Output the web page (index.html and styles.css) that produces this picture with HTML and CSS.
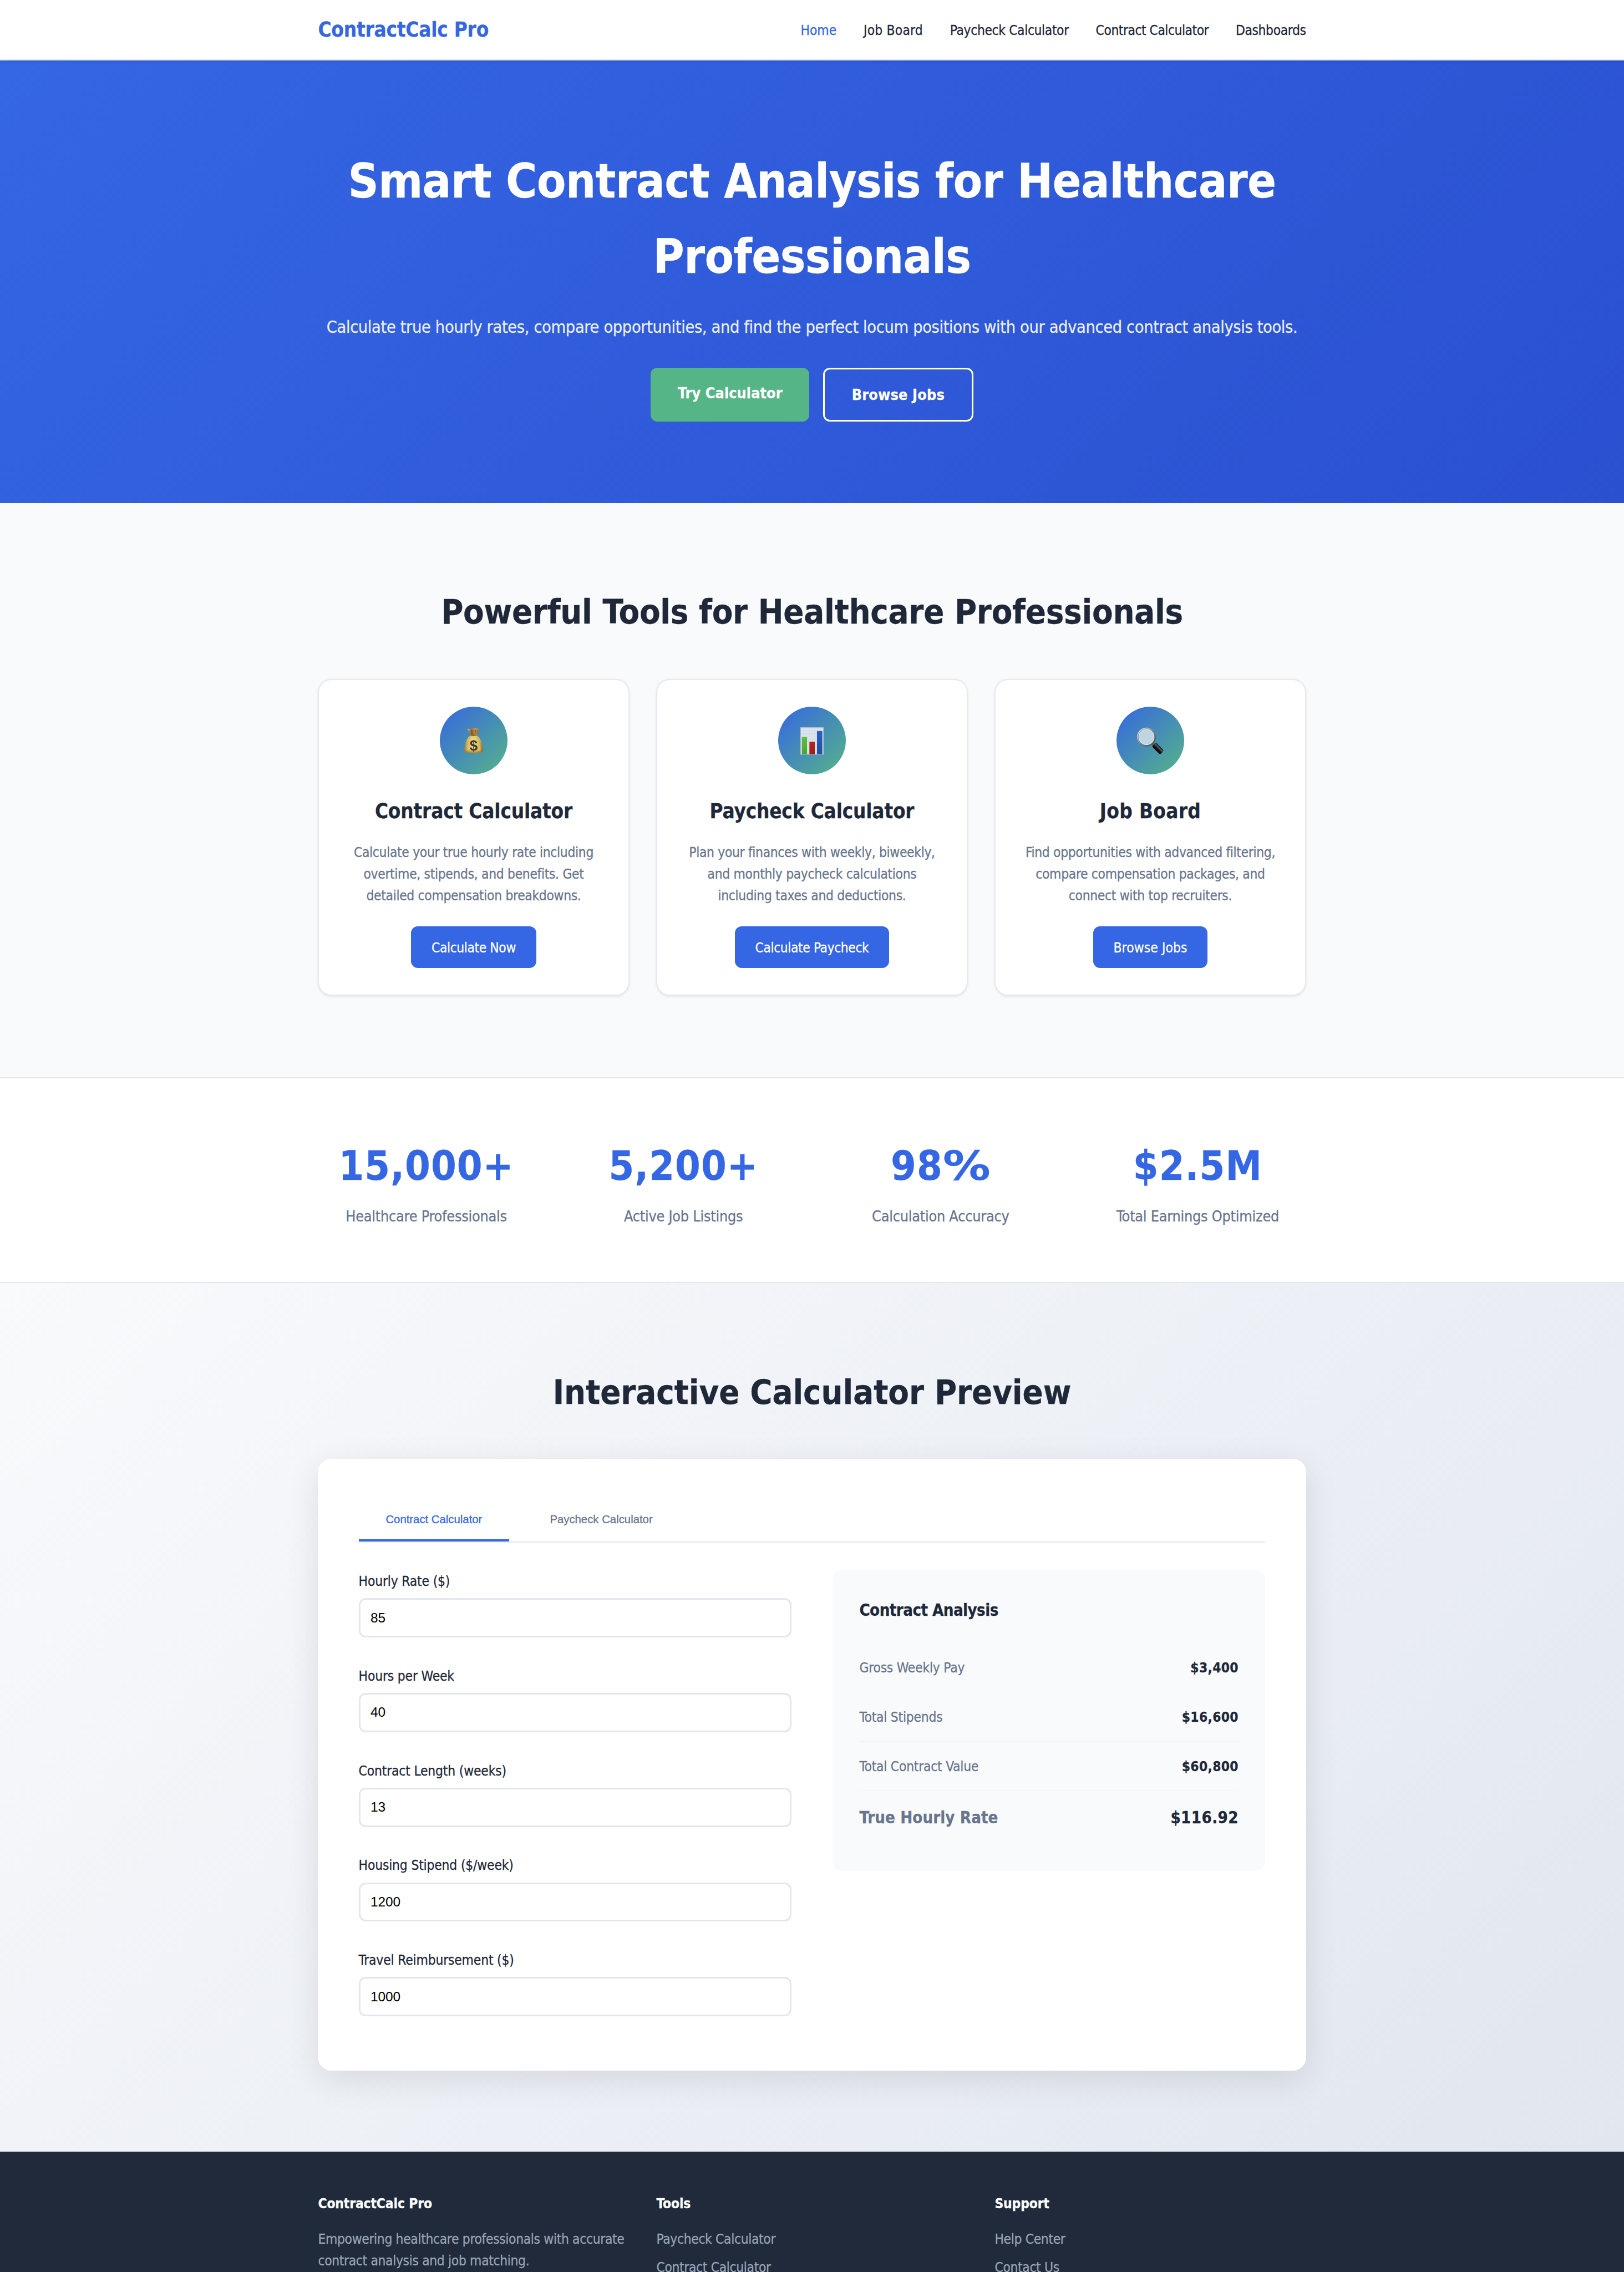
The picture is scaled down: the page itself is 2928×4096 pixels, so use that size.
FILE: index.html
```html
<!DOCTYPE html>
<html lang="en">
<head>
<meta charset="utf-8">
<title>ContractCalc Pro</title>
<link rel="stylesheet" href="styles.css">
</head>
<body>
<div class="page">
  <header class="header">
    <div class="container header-inner">
      <a class="logo">ContractCalc Pro</a>
      <nav class="nav">
        <a class="nav-link active">Home</a>
        <a class="nav-link wide">Job Board</a>
        <a class="nav-link">Paycheck Calculator</a>
        <a class="nav-link tight">Contract Calculator</a>
        <a class="nav-link">Dashboards</a>
      </nav>
    </div>
  </header>

  <section class="hero">
    <div class="container">
      <h1 class="hero-title">Smart Contract Analysis for Healthcare<br>Professionals</h1>
      <p class="hero-text">Calculate true hourly rates, compare opportunities, and find the perfect locum positions with our advanced contract analysis tools.</p>
      <div class="hero-actions">
        <a class="btn-hero btn-green">Try Calculator</a>
        <a class="btn-hero btn-outline">Browse Jobs</a>
      </div>
    </div>
  </section>

  <section class="tools">
    <div class="container">
      <h2 class="section-title tight">Powerful Tools for Healthcare Professionals</h2>
      <div class="cards">
        <article class="card">
          <div class="card-icon">
            <svg viewBox="0 0 314 314">
              <defs>
                <linearGradient id="bag" x1="0" x2="1"><stop offset="0" stop-color="#a9812f"/><stop offset=".2" stop-color="#dcc068"/><stop offset=".5" stop-color="#ecd983"/><stop offset=".82" stop-color="#d8b95c"/><stop offset="1" stop-color="#8a6424"/></linearGradient>
                <linearGradient id="neck" x1="0" x2="1"><stop offset="0" stop-color="#c9ad7a"/><stop offset=".35" stop-color="#8d5c20"/><stop offset=".6" stop-color="#b98743"/><stop offset="1" stop-color="#8a6a3e"/></linearGradient>
                <linearGradient id="shade" x1="0" x2="0" y1="0" y2="1"><stop offset=".8" stop-color="#7a4d12" stop-opacity="0"/><stop offset="1" stop-color="#7a4d12" stop-opacity=".65"/></linearGradient>
              </defs>
              <path fill="url(#bag)" d="M144 133C130 141 121 156 118 174C116 185 113 198 114 206C117 214 135 216 157 216C179 216 197 214 200 206C201 198 198 185 196 174C193 156 184 141 170 133Z"/>
              <path fill="url(#shade)" d="M144 133C130 141 121 156 118 174C116 185 113 198 114 206C117 214 135 216 157 216C179 216 197 214 200 206C201 198 198 185 196 174C193 156 184 141 170 133Z"/>
              <path fill="none" stroke="#a37a2c" stroke-opacity=".5" stroke-width="2" d="M148 136C138 146 130 158 127 178M166 136C178 148 186 162 189 182M157 136V146"/>
              <path fill="url(#neck)" d="M127 105C134 101 139 104 145 102C151 99 157 105 163 101C169 99 175 104 186 105C181 114 176 124 171 133Q157 138 143 133C138 124 134 113 127 105Z"/>
              <path fill="none" stroke="#e4cf9f" stroke-width="2" d="M130 106Q138 104 145 104T163 103T183 106"/>
              <path fill="none" stroke="#744814" stroke-width="2" d="M146 106L151 132M167 106L162 132M143 133Q157 138 171 133"/>
              <text class="bag-sign" x="157" y="203">$</text>
            </svg>
          </div>
          <h3 class="card-title">Contract Calculator</h3>
          <p class="card-text">Calculate your true hourly rate including<br>overtime, stipends, and benefits. Get<br>detailed compensation breakdowns.</p>
          <a class="btn">Calculate Now</a>
        </article>
        <article class="card">
          <div class="card-icon">
            <svg viewBox="0 0 314 314">
              <defs>
                <pattern id="mesh" width="4" height="4" patternUnits="userSpaceOnUse"><path d="M0 0H4M0 0V4" stroke="#b3bfcc" stroke-width="1.2"/></pattern>
                <linearGradient id="green" x1="0" x2="0" y1="0" y2="1"><stop stop-color="#5dbf40"/><stop offset="1" stop-color="#4aa535"/></linearGradient>
                <linearGradient id="red" x1="0" x2="0" y1="0" y2="1"><stop stop-color="#b5271d"/><stop offset="1" stop-color="#9c1f16"/></linearGradient>
                <linearGradient id="blue" x1="0" x2="0" y1="0" y2="1"><stop stop-color="#2860c6"/><stop offset="1" stop-color="#1f4fa4"/></linearGradient>
              </defs>
              <rect x="103" y="96" width="108" height="126" fill="#e6eef6"/>
              <rect x="103" y="96" width="108" height="126" fill="url(#mesh)"/>
              <rect x="104" y="97" width="106" height="124" fill="none" stroke="#a9b6c3" stroke-width="2"/>
              <rect x="110" y="141" width="24" height="80" fill="url(#green)"/>
              <rect x="145" y="163" width="25" height="58" fill="url(#red)"/>
              <rect x="180" y="113" width="25" height="108" fill="url(#blue)"/>
            </svg>
          </div>
          <h3 class="card-title">Paycheck Calculator</h3>
          <p class="card-text">Plan your finances with weekly, biweekly,<br>and monthly paycheck calculations<br>including taxes and deductions.</p>
          <a class="btn">Calculate Paycheck</a>
        </article>
        <article class="card">
          <div class="card-icon">
            <svg viewBox="0 0 314 314">
              <defs>
                <linearGradient id="rim" x1="0" y1="0" x2="1" y2="1"><stop stop-color="#eef0f2"/><stop offset=".45" stop-color="#8b8f93"/><stop offset="1" stop-color="#3e4145"/></linearGradient>
                <linearGradient id="handle" x1="0" y1="0" x2="1" y2="0"><stop stop-color="#050607"/><stop offset=".45" stop-color="#15181b"/><stop offset=".7" stop-color="#596068"/><stop offset="1" stop-color="#0b0c0e"/></linearGradient>
              </defs>
              <path d="M167 169L178 180" stroke="#6c5d55" stroke-width="11"/>
              <rect x="-13" y="-27" width="26" height="54" rx="8" transform="translate(192 194) rotate(-45)" fill="url(#handle)"/>
              <circle cx="139" cy="141" r="41" fill="#bfd5e2" stroke="url(#rim)" stroke-width="6"/>
              <circle cx="139" cy="141" r="38" fill="none" stroke="#4f565c" stroke-width="1.5"/>
              <circle cx="139" cy="141" r="35" fill="none" stroke="#d8e6ee" stroke-width="3"/>
            </svg>
          </div>
          <h3 class="card-title wide">Job Board</h3>
          <p class="card-text">Find opportunities with advanced filtering,<br>compare compensation packages, and<br>connect with top recruiters.</p>
          <a class="btn wide">Browse Jobs</a>
        </article>
      </div>
    </div>
  </section>

  <section class="stats">
    <div class="container stats-grid">
      <div><div class="stat-number">15,000+</div><div class="stat-label">Healthcare Professionals</div></div>
      <div><div class="stat-number">5,200+</div><div class="stat-label">Active Job Listings</div></div>
      <div><div class="stat-number">98<span class="percent">%</span></div><div class="stat-label">Calculation Accuracy</div></div>
      <div><div class="stat-number">$2.5M</div><div class="stat-label">Total Earnings Optimized</div></div>
    </div>
  </section>

  <section class="preview">
    <div class="container">
      <h2 class="section-title">Interactive Calculator Preview</h2>
      <div class="calculator">
        <div class="tabs">
          <button class="tab active">Contract Calculator</button>
          <button class="tab">Paycheck Calculator</button>
        </div>
        <div class="calc-grid">
          <form class="form">
            <div class="field"><label>Hourly Rate ($)</label><input type="text" value="85"></div>
            <div class="field"><label>Hours per Week</label><input type="text" value="40"></div>
            <div class="field"><label>Contract Length (weeks)</label><input type="text" value="13"></div>
            <div class="field"><label>Housing Stipend ($/week)</label><input type="text" value="1200"></div>
            <div class="field"><label>Travel Reimbursement ($)</label><input type="text" value="1000"></div>
          </form>
          <div class="results">
            <h3 class="results-title">Contract Analysis</h3>
            <div class="row"><span>Gross Weekly Pay</span><strong>$3,400</strong></div>
            <div class="row"><span>Total Stipends</span><strong>$16,600</strong></div>
            <div class="row"><span>Total Contract Value</span><strong>$60,800</strong></div>
            <div class="row total"><span>True Hourly Rate</span><strong>$116.92</strong></div>
          </div>
        </div>
      </div>
    </div>
  </section>

  <footer class="footer">
    <div class="container footer-grid">
      <div>
        <h4>ContractCalc Pro</h4>
        <p>Empowering healthcare professionals with accurate<br>contract analysis and job matching.</p>
      </div>
      <div>
        <h4>Tools</h4>
        <ul><li>Paycheck Calculator</li><li>Contract Calculator</li></ul>
      </div>
      <div>
        <h4>Support</h4>
        <ul><li>Help Center</li><li>Contact Us</li></ul>
      </div>
    </div>
  </footer>
</div>
</body>
</html>
```
FILE: styles.css
```css
:root {
  --primary: #3566e3;
  --primary-dark: #2a50d0;
  --green: #56b586;
  --ink: #1f2839;
  --muted: #68758c;
  --line: #e2e7ee;
  --bg: #f9fafc;
  font-size: 24.4px;
}

* { box-sizing: border-box; margin: 0; padding: 0; }

body {
  font-family: "DejaVu Sans Condensed", "DejaVu Sans", sans-serif;
  font-stretch: condensed;
  line-height: 1.6;
  letter-spacing: -0.0125em;
  -webkit-text-stroke: .012em;
  color: var(--ink);
  background: var(--bg);
}

.page { height: 4096px; overflow: hidden; }

.container { width: 73rem; margin: 0 auto; }

/* Lowers the baseline a little inside each line box, without changing the box's height in the flow */
.logo, .nav-link, .hero-title, .hero-text, .card-title, .card-text,
.stat-label, .field label, .results-title, .footer h4, .footer p, .footer li {
  padding-top: .04em;
}
.section-title, .stat-number { padding-top: .02em; }

/* Header */
.header {
  position: relative;
  background: #fff;
  border-bottom: 2px solid var(--line);
  box-shadow: 0 .0625rem .25rem rgba(0, 0, 0, .12);
}
.header-inner { display: flex; align-items: center; justify-content: space-between; height: 4.38rem; padding-top: .05rem; }
.logo { font-size: 1.5rem; font-weight: 700; color: var(--primary); letter-spacing: -0.006em; }
.nav { display: flex; gap: 2rem; letter-spacing: -0.0155em; }
.nav-link.wide { letter-spacing: .008em; }
.nav-link.tight { letter-spacing: -0.02em; }
.nav-link.active { color: var(--primary); letter-spacing: 0; }

/* Hero */
.hero {
  padding: 6rem 0;
  text-align: center;
  color: #fff;
  background: linear-gradient(135deg, var(--primary), var(--primary-dark));
}
.hero-title { font-size: 3.5rem; font-weight: 700; letter-spacing: -0.008em; margin-bottom: calc(1.5rem - .04em); }
.hero-text { font-size: 1.25rem; white-space: nowrap; letter-spacing: -0.0125em; opacity: .9; margin-bottom: calc(2rem - .04em); }
.hero-actions { display: flex; justify-content: center; gap: 1rem; }
.btn-hero { padding: 1.04rem 2rem .96rem; border-radius: .5rem; font-size: 1.1rem; font-weight: 700; letter-spacing: .002em; }
.btn-green { background: var(--green); }
.btn-outline { border: .125rem solid #fff; letter-spacing: .006em; }

/* Tools */
.tools { padding: 6rem 0; }
.section-title { font-size: 2.5rem; font-weight: 700; text-align: center; letter-spacing: -0.0015em; margin-bottom: calc(3rem - .02em); }
.section-title.tight { letter-spacing: -0.0045em; }
.cards { display: grid; grid-template-columns: repeat(3, 1fr); gap: 2rem; }
.card {
  display: flex;
  flex-direction: column;
  align-items: center;
  padding: 1.98rem;
  text-align: center;
  background: #fff;
  border: 2px solid #e5e9f0;
  border-radius: 1rem;
  box-shadow: 0 .0625rem .1875rem rgba(0, 0, 0, .08);
}
.card-icon {
  width: 5rem;
  height: 5rem;
  margin-bottom: 1.5rem;
  border-radius: 50%;
  background: linear-gradient(135deg, var(--primary), var(--green));
}
.card-icon svg { display: block; width: 100%; height: 100%; }
.bag-sign { font: 700 66px "Liberation Sans", sans-serif; fill: #3a332f; text-anchor: middle; letter-spacing: 0; -webkit-text-stroke: 0; }
.card-title { font-size: 1.5rem; font-weight: 700; letter-spacing: -0.005em; margin-bottom: calc(1rem - .04em); }
.card-title.wide { letter-spacing: .009em; }
.card-text { color: var(--muted); white-space: nowrap; letter-spacing: -0.0135em; margin-bottom: calc(1.5rem - .04em); }
.btn { padding: .78rem 1.5rem .72rem; border-radius: .5rem; color: #fff; background: var(--primary); letter-spacing: -0.017em; }
.btn.wide { letter-spacing: .004em; }

/* Stats */
.stats { padding: 4rem 0; background: #fff; border-top: 2px solid var(--line); border-bottom: 2px solid var(--line); text-align: center; }
.stats-grid { display: grid; grid-template-columns: repeat(4, 1fr); gap: 3rem; }
.stat-number { font-size: 3rem; line-height: 4.8rem; font-weight: 700; color: var(--primary); letter-spacing: .014em; margin-bottom: calc(.5rem - .02em); }
.percent { display: inline-block; transform: scaleX(1.3); transform-origin: left; margin-right: .27em; letter-spacing: 0; }
.stat-label { font-size: 1.1rem; color: var(--muted); letter-spacing: -0.0095em; margin-bottom: -.04em; }

/* Calculator preview */
.preview { padding: 6rem 0; background: linear-gradient(135deg, var(--bg), #e1e6ef); }
.calculator { padding: 3rem; background: #fff; border-radius: 1rem; box-shadow: 0 .625rem 2.5rem rgba(0, 0, 0, .1); }
.tabs { display: flex; gap: 1rem; margin-bottom: 2rem; border-bottom: 2px solid var(--line); }
.tab {
  padding: 1rem 2rem;
  font: .8333rem/.9375rem "Liberation Sans", Arial, sans-serif;
  color: var(--muted);
  background: none;
  border: 0;
  border-bottom: .1875rem solid transparent;
}
.tab.active { color: var(--primary); border-bottom-color: var(--primary); }
.calc-grid { display: grid; grid-template-columns: 1fr 1fr; gap: 3rem; align-items: start; }
.form { display: grid; gap: 1rem; }
.field { margin-bottom: 1rem; letter-spacing: -0.007em; }
.field label { display: block; margin-bottom: .46rem; }
.field input {
  display: block;
  width: 100%;
  height: 2.9rem;
  padding: 0 .75rem;
  font: 1rem "Liberation Sans", Arial, sans-serif;
  -webkit-text-stroke: 0;
  color: #000;
  background: #fff;
  border: .125rem solid var(--line);
  border-radius: .5rem;
}
.results { padding: 2rem; background: var(--bg); border-radius: .75rem; }
.results-title { font-size: 1.2rem; font-weight: 700; letter-spacing: -0.02em; margin-bottom: calc(1.5rem - .04em); }
.row { display: flex; justify-content: space-between; padding: 1.03rem 0 .97rem; border-bottom: 1.5px solid #f1f4f8; letter-spacing: -0.009em; }
.row span { color: var(--muted); }
.row strong { letter-spacing: .013em; margin-right: -.013em; }
.row.total { font-size: 1.2rem; font-weight: 700; border-bottom: 0; letter-spacing: .002em; }

/* Footer */
.footer { height: 12rem; padding: 3rem 0; color: #fff; background: #202a3a; }
.footer-grid { display: grid; grid-template-columns: repeat(3, 1fr); gap: 2rem; }
.footer h4 { font-size: 1rem; font-weight: 700; letter-spacing: -0.005em; margin-bottom: .96rem; }
.footer p, .footer li { color: #98a3b5; white-space: nowrap; letter-spacing: -0.014em; }
.footer ul { list-style: none; }
.footer li { margin-bottom: .46rem; }
```
